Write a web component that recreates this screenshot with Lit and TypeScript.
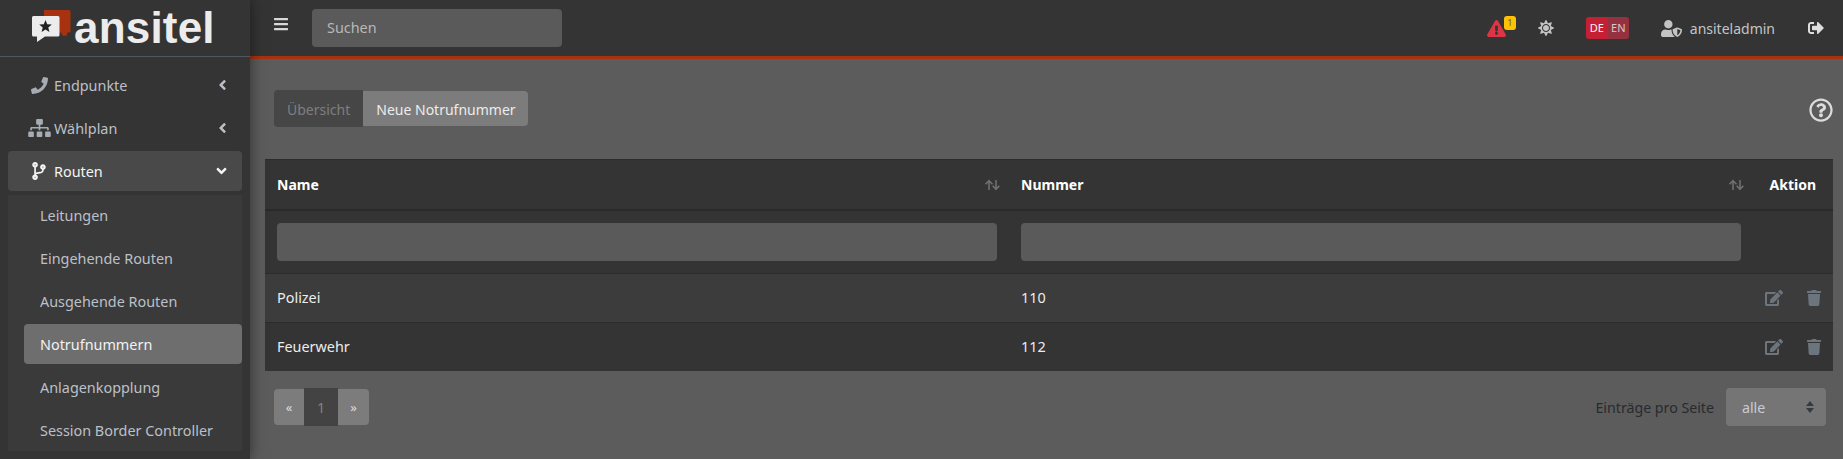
import { LitElement, html, css, svg } from "lit";
import { customElement } from "lit/decorators.js";

const icon = (w: number, h: number, d: string, cls = "") =>
  html`<svg class=${cls} viewBox="0 0 ${w} ${h}" fill="currentColor">${svg`<path d=${d}></path>`}</svg>`;

const PHONE = "M493.4 24.6l-104-24c-11.3-2.6-22.9 3.3-27.5 13.9l-48 112c-4.2 9.8-1.4 21.3 6.9 28l60.6 49.6c-36 76.7-98.9 140.5-177.2 177.2l-49.6-60.6c-6.8-8.3-18.2-11.1-28-6.9l-112 48C3.9 366.5-2 378.1.6 389.4l24 104C27.1 504.2 36.7 512 48 512c256.1 0 464-207.5 464-464 0-11.2-7.7-20.9-18.6-23.4z";
const SITEMAP = "M128 352H32c-17.67 0-32 14.33-32 32v96c0 17.67 14.33 32 32 32h96c17.67 0 32-14.33 32-32v-96c0-17.67-14.33-32-32-32zm-24-80h192v48h48v-48h192v48h48v-57.59c0-21.17-17.23-38.41-38.41-38.41H344v-64h40c17.67 0 32-14.33 32-32V32c0-17.67-14.33-32-32-32H256c-17.67 0-32 14.33-32 32v96c0 17.67 14.33 32 32 32h40v64H94.41C73.23 224 56 241.23 56 262.41V320h48v-48zm264 80h-96c-17.67 0-32 14.33-32 32v96c0 17.67 14.33 32 32 32h96c17.67 0 32-14.33 32-32v-96c0-17.67-14.33-32-32-32zm240 0h-96c-17.67 0-32 14.33-32 32v96c0 17.67 14.33 32 32 32h96c17.67 0 32-14.33 32-32v-96c0-17.67-14.33-32-32-32z";
const BRANCH = "M384 144c0-44.2-35.8-80-80-80s-80 35.8-80 80c0 36.4 24.3 67.1 57.5 76.8-.6 16.1-4.2 28.5-11 36.9-15.4 19.2-49.3 22.4-85.2 25.7-28.2 2.6-57.4 5.4-81.3 16.9v-144c32.5-10.2 56-40.5 56-76.3 0-44.2-35.8-80-80-80S0 35.8 0 80c0 35.8 23.5 66.1 56 76.3v199.3C23.5 365.9 0 396.2 0 432c0 44.2 35.8 80 80 80s80-35.8 80-80c0-34-21.2-63.1-51.2-74.6 3.1-5.2 7.8-9.8 14.9-13.4 16.2-8.2 40.4-10.4 66.1-12.8 42.2-3.9 90-8.4 118.2-43.4 14-17.4 21.1-39.8 21.6-67.9 31.6-10.8 54.4-40.7 54.4-75.9zM80 64c8.8 0 16 7.2 16 16s-7.2 16-16 16-16-7.2-16-16 7.2-16 16-16zm0 384c-8.8 0-16-7.2-16-16s7.2-16 16-16 16 7.2 16 16-7.2 16-16 16zm224-320c8.8 0 16 7.2 16 16s-7.2 16-16 16-16-7.2-16-16 7.2-16 16-16z";
const ANGLE_LEFT = "M31.7 239l136-136c9.4-9.4 24.6-9.4 33.9 0l22.6 22.6c9.4 9.4 9.4 24.6 0 33.9L127.9 256l96.4 96.4c9.4 9.4 9.4 24.6 0 33.9L201.7 409c-9.4 9.4-24.6 9.4-33.9 0l-136-136c-9.5-9.4-9.5-24.6-.1-34z";
const ANGLE_DOWN = "M143 352.3L7 216.3c-9.4-9.4-9.4-24.6 0-33.9l22.6-22.6c9.4-9.4 24.6-9.4 33.9 0l96.4 96.4 96.4-96.4c9.4-9.4 24.6-9.4 33.9 0l22.6 22.6c9.4 9.4 9.4 24.6 0 33.9l-136 136c-9.2 9.4-24.4 9.4-33.8 0z";
const BARS = "M16 132h416c8.837 0 16-7.163 16-16V76c0-8.837-7.163-16-16-16H16C7.163 60 0 67.163 0 76v40c0 8.837 7.163 16 16 16zm0 160h416c8.837 0 16-7.163 16-16v-40c0-8.837-7.163-16-16-16H16c-8.837 0-16 7.163-16 16v40c0 8.837 7.163 16 16 16zm0 160h416c8.837 0 16-7.163 16-16v-40c0-8.837-7.163-16-16-16H16c-8.837 0-16 7.163-16 16v40c0 8.837 7.163 16 16 16z";
const WARNING = "M569.517 440.013C587.975 472.007 564.806 512 527.94 512H48.054c-36.937 0-59.999-40.055-41.577-71.987L246.423 23.985c18.467-32.009 64.72-31.951 83.154 0l239.94 416.028zM288 354c-25.405 0-46 20.595-46 46s20.595 46 46 46 46-20.595 46-46-20.595-46-46-46zm-43.673-165.346l7.418 136c.347 6.364 5.609 11.346 11.982 11.346h48.546c6.373 0 11.635-4.982 11.982-11.346l7.418-136c.375-6.874-5.098-12.654-11.982-12.654h-63.383c-6.884 0-12.356 5.78-11.981 12.654z";
const SUN = "M256 160c-52.9 0-96 43.1-96 96s43.1 96 96 96 96-43.1 96-96-43.1-96-96-96zm246.4 80.5l-94.7-47.3 33.5-100.4c4.5-13.6-8.4-26.5-21.9-21.9l-100.4 33.5-47.4-94.8c-6.4-12.8-24.6-12.8-31 0l-47.3 94.7L92.7 70.8c-13.6-4.5-26.5 8.4-21.9 21.9l33.5 100.4-94.7 47.4c-12.8 6.4-12.8 24.6 0 31l94.7 47.3-33.5 100.5c-4.5 13.6 8.4 26.5 21.9 21.9l100.4-33.5 47.3 94.7c6.4 12.8 24.6 12.8 31 0l47.3-94.7 100.4 33.5c13.6 4.5 26.5-8.4 21.9-21.9l-33.5-100.4 94.7-47.3c13-6.5 13-24.7.2-31.1zm-155.9 106c-49.9 49.9-131.1 49.9-181 0-49.9-49.9-49.9-131.1 0-181 49.9-49.9 131.1-49.9 181 0 49.9 49.9 49.9 131.1 0 181z";
const USER_SHIELD = "M622.3 271.1l-115.2-45c-4.1-1.6-12.6-3.7-22.2 0l-115.2 45c-10.7 4.2-17.7 14-17.7 24.9 0 111.6 68.7 188.8 132.9 213.9 9.6 3.7 18 1.6 22.2 0C558.4 489.9 640 420.5 640 296c0-10.9-7-20.7-17.7-24.9zM496 462.4V273.3l95.5 37.3c-5.6 87.1-60.9 135.4-95.5 151.8zM224 256c70.7 0 128-57.3 128-128S294.7 0 224 0 96 57.3 96 128s57.3 128 128 128zm96 40c0-2.5.8-4.8 1.1-7.2-2.5-.1-4.9-.8-7.5-.8h-16.7c-22.2 10.2-46.9 16-72.9 16s-50.6-5.8-72.9-16h-16.7C60.2 288 0 348.2 0 422.4V464c0 26.5 21.5 48 48 48h352c6.8 0 13.3-1.5 19.1-4-54-42.9-99.1-115.8-99.1-212z";
const SIGN_OUT = "M497 273L329 441c-15 15-41 4.5-41-17v-96H152c-13.3 0-24-10.7-24-24v-96c0-13.3 10.7-24 24-24h136V88c0-21.4 25.9-32 41-17l168 168c9.3 9.4 9.3 24.6 0 34zM192 436v-40c0-6.6-5.4-12-12-12H96c-17.7 0-32-14.3-32-32V160c0-17.7 14.3-32 32-32h84c6.6 0 12-5.4 12-12V76c0-6.6-5.4-12-12-12H96c-53 0-96 43-96 96v192c0 53 43 96 96 96h84c6.6 0 12-5.4 12-12z";
const EDIT = "M402.6 83.2l90.2 90.2c3.8 3.8 3.8 10 0 13.8L274.4 405.6l-92.8 10.3c-12.4 1.4-22.9-9.1-21.5-21.5l10.3-92.8L388.8 83.2c3.8-3.8 10-3.8 13.8 0zm162-22.9l-48.8-48.8c-15.2-15.2-39.9-15.2-55.2 0l-35.4 35.4c-3.8 3.8-3.8 10 0 13.8l90.2 90.2c3.8 3.8 10 3.8 13.8 0l35.4-35.4c15.2-15.3 15.2-40 0-55.2zM384 346.2V448H64V128h229.8c3.2 0 6.2-1.3 8.5-3.5l40-40c7.6-7.6 2.2-20.5-8.5-20.5H48C21.5 64 0 85.5 0 112v352c0 26.5 21.5 48 48 48h352c26.5 0 48-21.5 48-48V306.2c0-10.7-12.9-16-20.5-8.5l-40 40c-2.2 2.3-3.5 5.3-3.5 8.5z";
const TRASH = "M432 32H312l-9.4-18.7A24 24 0 0 0 281.1 0H166.8a23.72 23.72 0 0 0-21.4 13.3L136 32H16A16 16 0 0 0 0 48v32a16 16 0 0 0 16 16h416a16 16 0 0 0 16-16V48a16 16 0 0 0-16-16zM53.2 467a48 48 0 0 0 47.9 45h245.8a48 48 0 0 0 47.9-45L416 128H32z";
const QUESTION = "M256 8C119.043 8 8 119.083 8 256c0 136.997 111.043 248 248 248s248-111.003 248-248C504 119.083 392.957 8 256 8zm0 448c-110.532 0-200-89.431-200-200 0-110.495 89.472-200 200-200 110.491 0 200 89.471 200 200 0 110.53-89.431 200-200 200zm107.244-255.2c0 67.052-72.421 68.084-72.421 92.863V300c0 6.627-5.373 12-12 12h-45.647c-6.627 0-12-5.373-12-12v-8.659c0-35.745 27.1-50.034 47.579-61.516 17.561-9.845 28.324-16.541 28.324-29.579 0-17.246-21.999-28.693-39.784-28.693-23.189 0-33.894 10.977-48.942 29.969-4.057 5.12-11.46 6.071-16.666 2.124l-27.824-21.098c-5.107-3.872-6.251-11.066-2.644-16.363C184.846 131.491 214.94 112 261.794 112c49.071 0 101.45 38.304 101.45 88.8zM298 368c0 23.159-18.841 42-42 42s-42-18.841-42-42 18.841-42 42-42 42 18.841 42 42z";

const SUBMENU = ["Leitungen", "Eingehende Routen", "Ausgehende Routen", "Notrufnummern", "Anlagenkopplung", "Session Border Controller"];
const ROWS = [
  { name: "Polizei", nummer: "110" },
  { name: "Feuerwehr", nummer: "112" },
];

@customElement("app-root")
export class AppRoot extends LitElement {
  static styles = css`
    :host {
      display: flex;
      height: 100vh;
      overflow: hidden;
      font-family: "Noto Sans", sans-serif;
      font-size: 14.4px;
      color: #e8e8e8;
      background: #5c5c5c;
    }
    svg {
      display: block;
    }

    /* sidebar */
    .sidebar {
      flex: 0 0 250px;
      background: #343434;
      box-shadow: 0 0 14px rgba(0, 0, 0, 0.5);
      position: relative;
      z-index: 2;
    }
    .brand {
      height: 56px;
      border-bottom: 1px solid #4f5962;
      display: flex;
      align-items: flex-start;
      padding-left: 32px;
      color: #ececec;
    }
    .brand-logo {
      width: 40px;
      height: 34px;
      flex: none;
      margin-top: 9px;
    }
    .brand-text {
      font-family: "Liberation Sans", sans-serif;
      font-size: 44px;
      line-height: 56px;
      font-weight: 700;
      letter-spacing: 0.2px;
      margin-left: 2px;
    }
    nav {
      padding: 8px;
    }
    .item {
      height: 40px;
      margin-bottom: 3px;
      display: flex;
      align-items: center;
      padding: 0 16px;
      border-radius: 4px;
      color: #bcc0c8;
    }
    .item.open {
      background: #494949;
      color: #f4f4f4;
      margin-bottom: 0;
    }
    .nav-icon {
      flex: 0 0 30px;
      display: flex;
      justify-content: center;
    }
    .i-phone {
      width: 17px;
      height: 17px;
      color: #a6abb4;
    }
    .i-sitemap {
      width: 23px;
      height: 18px;
      color: #a6abb4;
    }
    .i-branch {
      width: 14px;
      height: 18px;
    }
    .label {
      flex: 1;
    }
    .chev {
      width: 9px;
      height: 16px;
      margin-right: -1px;
    }
    .chev-down {
      width: 11px;
      height: 16px;
      margin-right: -1px;
    }
    .sub {
      background: #3a3a3a;
      padding-bottom: 1px;
      margin-top: 4px;
    }
    .sub-item {
      height: 40px;
      margin: 0 0 3px 16px;
      padding-left: 16px;
      display: flex;
      align-items: center;
      border-radius: 4px;
      color: #bcc0c8;
    }
    .sub-item:last-child {
      margin-bottom: 0;
    }
    .sub-item.active {
      background: #6e6e6e;
      color: #f2f2f2;
    }

    /* top bar */
    .main {
      flex: 1;
      min-width: 0;
      display: flex;
      flex-direction: column;
    }
    .topbar {
      height: 56px;
      flex: none;
      background: #343434;
      border-bottom: 3px solid #a8320f;
      display: flex;
      align-items: center;
      color: #c4c4c4;
    }
    .bars {
      width: 14px;
      height: 16px;
      margin-left: 24px;
      margin-top: -8px;
      color: #d8d8d8;
    }
    .search {
      width: 250px;
      height: 38px;
      margin-left: 24px;
      margin-top: -1px;
      box-sizing: border-box;
      background: #5a5a5a;
      border: 0;
      border-radius: 4px;
      padding: 0 15px;
      font: inherit;
      color: #ddd;
      outline: none;
    }
    .search::placeholder {
      color: #b8b8b8;
      opacity: 1;
    }
    .spacer {
      flex: 1;
    }
    .alert {
      position: relative;
      margin-right: 32px;
      color: #dc3545;
    }
    .alert svg {
      width: 19px;
      height: 17px;
    }
    .badge {
      position: absolute;
      left: 17px;
      top: -4px;
      width: 12px;
      height: 14px;
      border-radius: 3px;
      background: #ffc107;
      color: #5f5a3a;
      font-size: 9px;
      line-height: 14px;
      text-align: center;
    }
    .sun {
      width: 16px;
      height: 16px;
      margin-right: 32px;
    }
    .lang {
      display: flex;
      height: 22px;
      border-radius: 3px;
      overflow: hidden;
      font-size: 11px;
      line-height: 22px;
      margin-right: 32px;
    }
    .lang span {
      width: 22px;
      text-align: center;
      background: #c41f33;
      color: #f4f4f4;
    }
    .lang span + span {
      width: 21px;
      background: #96323f;
      color: #d8c8ca;
    }
    .user-icon {
      width: 21px;
      height: 17px;
      margin-right: 8px;
    }
    .uname {
      margin-right: 33px;
      font-size: 14px;
    }
    .logout {
      width: 16px;
      height: 16px;
      margin-right: 19px;
      color: #dedede;
    }

    /* content */
    .content {
      flex: 1;
      padding: 31px 10px 0 15px;
      background: #5c5c5c;
    }
    .toolbar {
      display: flex;
      justify-content: space-between;
      align-items: center;
      height: 37px;
      padding-left: 9px;
      margin-bottom: 32px;
    }
    .tabs {
      display: flex;
    }
    .tab {
      height: 37px;
      box-sizing: border-box;
      padding: 2px 13px 0;
      display: flex;
      align-items: center;
      background: #464646;
      color: #7e7e7e;
      border-radius: 4px 0 0 4px;
      font-size: 14px;
    }
    .tab.on {
      height: 35px;
      margin: 1px 0;
      padding-right: 12px;
      background: #7c7c7c;
      color: #ececec;
      border-radius: 0 4px 4px 0;
    }
    .help {
      width: 24px;
      height: 24px;
      margin-top: 2px;
      color: #dcdcdc;
    }
    table {
      width: 100%;
      border-collapse: collapse;
      table-layout: fixed;
      background: #343434;
    }
    th {
      height: 49px;
      padding: 0 8px 0 12px;
      text-align: left;
      font-weight: 700;
      font-size: 14px;
      color: #fff;
      border-top: 1px solid #2c2c2c;
      border-bottom: 2px solid #2a2a2a;
    }
    .th-in {
      display: flex;
      justify-content: space-between;
      align-items: center;
    }
    .sort {
      width: 17px;
      height: 12px;
      color: #6f6f6f;
    }
    th.act {
      text-align: right;
      padding-right: 17px;
    }
    .filter td {
      height: 63px;
      padding: 0 12px;
      box-sizing: border-box;
    }
    .filter input {
      display: block;
      width: 100%;
      height: 38px;
      box-sizing: border-box;
      background: #5a5a5a;
      border: 0;
      border-radius: 4px;
    }
    .row td {
      height: 49px;
      box-sizing: border-box;
      padding: 0 12px;
      border-top: 1px solid #2c2c2c;
      color: #ececec;
    }
    .row.odd td {
      background: #3c3c3c;
    }
    .acts {
      display: flex;
      justify-content: flex-end;
      align-items: center;
      gap: 24px;
      color: #6c757d;
    }
    .i-edit {
      width: 18px;
      height: 16px;
    }
    .i-trash {
      width: 14px;
      height: 16px;
    }
    .footer {
      display: flex;
      justify-content: space-between;
      align-items: center;
      margin-top: 17px;
      padding: 0 7px 0 9px;
    }
    .pager {
      display: flex;
      align-items: center;
    }
    .pg {
      height: 36px;
      width: 30px;
      display: flex;
      align-items: center;
      justify-content: center;
      background: #7c7c7c;
      color: #dcdcdc;
      font-size: 13px;
    }
    .pg:first-child {
      border-radius: 4px 0 0 4px;
    }
    .pg:last-child {
      border-radius: 0 4px 4px 0;
      width: 31px;
    }
    .pg.cur {
      width: 34px;
      height: 38px;
      background: #434343;
      color: #828282;
      font-size: 14.4px;
    }
    .per-page {
      display: flex;
      align-items: center;
      gap: 12px;
      color: #272b2f;
      font-size: 14.2px;
    }
    .select {
      width: 100px;
      height: 38px;
      box-sizing: border-box;
      padding: 0 12px 0 16px;
      display: flex;
      align-items: center;
      justify-content: space-between;
      background: #757575;
      border-radius: 4px;
      color: #c8ccd2;
    }
    .select svg {
      width: 8px;
      height: 12px;
      color: #343a40;
    }
  `;

  private sortIcon() {
    return html`<svg class="sort" viewBox="0 0 17 12" fill="none" stroke="currentColor" stroke-width="1.6">
      <path d="M5 11V2M1.5 5.2 5 1.6l3.5 3.6M12 1v9M8.7 6.8 12 10.4l3.3-3.6"></path>
    </svg>`;
  }

  render() {
    return html`
      <aside class="sidebar">
        <div class="brand">
          <svg class="brand-logo" viewBox="0 0 40 34">
            <path fill="#a8320f" d="M12 1h25a1.5 1.5 0 0 1 1.5 1.5V22a1.5 1.5 0 0 1-1.5 1.5h-2v3l-4 .5-2-3.5H12z"></path>
            <path fill="#ececec" d="M1.5 7H26a1.500 1.500 0 0 1 1.500 1.500V26a1.500 1.500 0 0 1-1.500 1.500H13L5 33v-5.500H1.500A1.500 1.500 0 0 1 0 26V8.500A1.500 1.500 0 0 1 1.500 7z"></path>
            <path fill="#222" d="m13.500 11 1.700 4.300 4.600.3-3.500 3 1.100 4.500-3.900-2.500-3.900 2.500 1.100-4.500-3.500-3 4.600-.3z"></path>
          </svg>
          <span class="brand-text">ansitel</span>
        </div>
        <nav>
          <div class="item">
            <span class="nav-icon">${icon(512, 512, PHONE, "i-phone")}</span>
            <span class="label">Endpunkte</span>
            ${icon(256, 512, ANGLE_LEFT, "chev")}
          </div>
          <div class="item">
            <span class="nav-icon">${icon(640, 512, SITEMAP, "i-sitemap")}</span>
            <span class="label">Wählplan</span>
            ${icon(256, 512, ANGLE_LEFT, "chev")}
          </div>
          <div class="item open">
            <span class="nav-icon">${icon(384, 512, BRANCH, "i-branch")}</span>
            <span class="label">Routen</span>
            ${icon(320, 512, ANGLE_DOWN, "chev-down")}
          </div>
          <div class="sub">
            ${SUBMENU.map(
              (s) => html`<div class="sub-item ${s === "Notrufnummern" ? "active" : ""}">${s}</div>`
            )}
          </div>
        </nav>
      </aside>
      <div class="main">
        <header class="topbar">
          ${icon(448, 512, BARS, "bars")}
          <input class="search" placeholder="Suchen" />
          <span class="spacer"></span>
          <span class="alert">${icon(576, 512, WARNING)}<span class="badge">1</span></span>
          ${icon(512, 512, SUN, "sun")}
          <span class="lang"><span>DE</span><span>EN</span></span>
          ${icon(640, 512, USER_SHIELD, "user-icon")}
          <span class="uname">ansiteladmin</span>
          ${icon(512, 512, SIGN_OUT, "logout")}
        </header>
        <main class="content">
          <div class="toolbar">
            <div class="tabs">
              <div class="tab">Übersicht</div>
              <div class="tab on">Neue Notrufnummer</div>
            </div>
            ${icon(512, 512, QUESTION, "help")}
          </div>
          <table>
            <colgroup>
              <col style="width:744px" />
              <col style="width:744px" />
              <col style="width:80px" />
            </colgroup>
            <thead>
              <tr>
                <th><div class="th-in">Name ${this.sortIcon()}</div></th>
                <th><div class="th-in">Nummer ${this.sortIcon()}</div></th>
                <th class="act">Aktion</th>
              </tr>
            </thead>
            <tbody>
              <tr class="filter">
                <td><input /></td>
                <td><input /></td>
                <td></td>
              </tr>
              ${ROWS.map(
                (r, i) => html`<tr class="row ${i % 2 === 0 ? "odd" : ""}">
                  <td>${r.name}</td>
                  <td>${r.nummer}</td>
                  <td>
                    <div class="acts">${icon(576, 512, EDIT, "i-edit")}${icon(448, 512, TRASH, "i-trash")}</div>
                  </td>
                </tr>`
              )}
            </tbody>
          </table>
          <div class="footer">
            <div class="pager">
              <div class="pg">«</div>
              <div class="pg cur">1</div>
              <div class="pg">»</div>
            </div>
            <div class="per-page">
              <span>Einträge pro Seite</span>
              <div class="select">
                <span>alle</span>
                <svg viewBox="0 0 8 12" fill="currentColor"><path d="M4 0 8 5H0zM0 7h8l-4 5z"></path></svg>
              </div>
            </div>
          </div>
        </main>
      </div>
    `;
  }
}

declare global {
  interface HTMLElementTagNameMap {
    "app-root": AppRoot;
  }
}
